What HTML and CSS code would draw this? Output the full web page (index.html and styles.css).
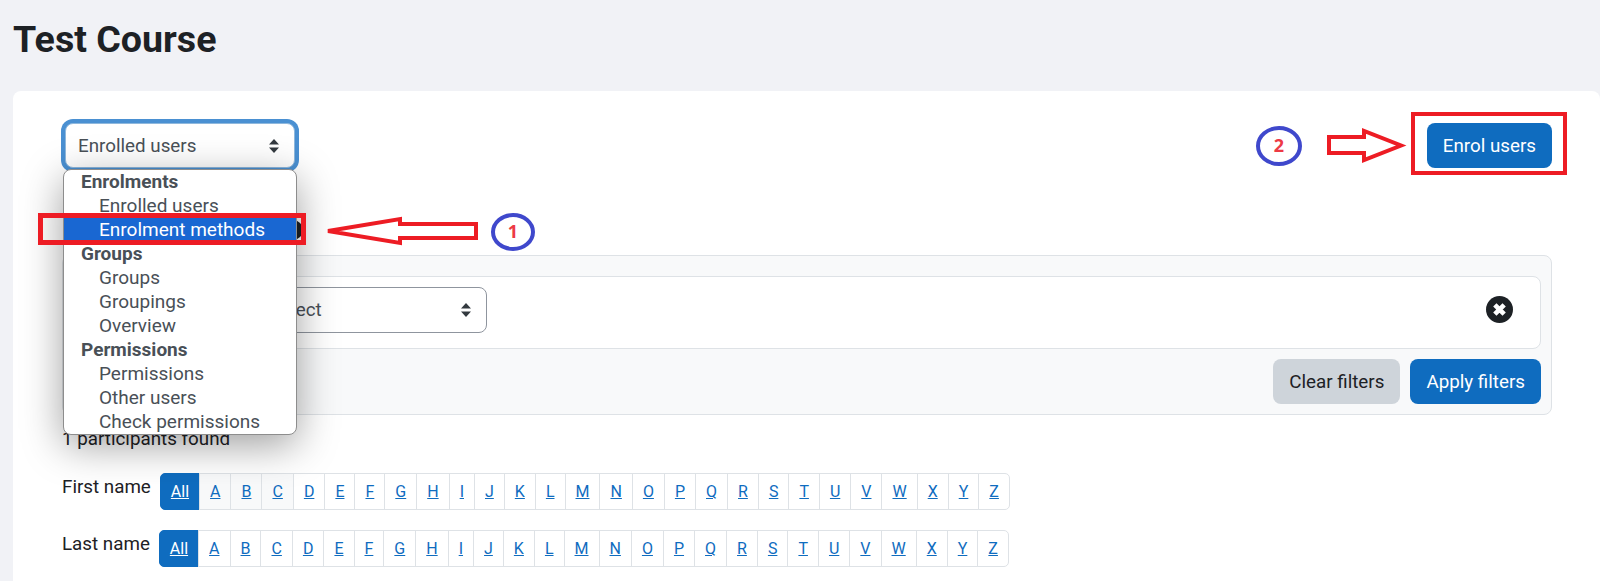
FILE: index.html
```html
<!DOCTYPE html>
<html lang="en">
<head>
  <meta charset="UTF-8">
  <title>Test Course: Participants</title>
  <link rel="stylesheet" href="styles.css">
</head>
<body>
  <h1 class="page-title">Test Course</h1>

  <main class="card">
    <div class="top-row">
      <div class="jump-wrapper">
        <div class="select-box select-focus">
          <span>Enrolled users</span>
          <svg class="sort-icon" viewBox="0 0 10 14"><path d="M5 0l5 5.6H0zM5 14L0 8.4h10z"/></svg>
        </div>
        <ul class="jump-menu">
          <li class="menu-group">Enrolments</li>
          <li>Enrolled users</li>
          <li class="menu-active">Enrolment methods</li>
          <li class="menu-group">Groups</li>
          <li>Groups</li>
          <li>Groupings</li>
          <li>Overview</li>
          <li class="menu-group">Permissions</li>
          <li>Permissions</li>
          <li>Other users</li>
          <li>Check permissions</li>
        </ul>
      </div>
      <button class="btn btn-primary enrol-btn">Enrol users</button>
    </div>

    <div class="hidden-row"><span class="help-dot"></span></div>

    <section class="filter-panel">
      <div class="filter-row">
        <div class="select-box filter-select">
          <span>Select</span>
          <svg class="sort-icon" viewBox="0 0 10 14"><path d="M5 0l5 5.6H0zM5 14L0 8.4h10z"/></svg>
        </div>
        <svg class="remove-icon" viewBox="0 0 26 26">
          <circle cx="13" cy="13" r="13"/>
          <path d="M8.5 8.5l9 9M17.5 8.5l-9 9"/>
        </svg>
      </div>
      <div class="filter-actions">
        <button class="btn btn-secondary">Clear filters</button>
        <button class="btn btn-primary">Apply filters</button>
      </div>
    </section>

    <p class="found">1 participants found</p>

    <div class="initials first-row">
      <span class="initials-label">First name</span>
      <div class="letter-bar">
        <a class="active" href="#">All</a><a class="hovered" href="#">A</a><a class="hovered" href="#">B</a><a class="hovered" href="#">C</a><a href="#">D</a><a href="#">E</a><a href="#">F</a><a href="#">G</a><a href="#">H</a><a href="#">I</a><a href="#">J</a><a href="#">K</a><a href="#">L</a><a href="#">M</a><a href="#">N</a><a href="#">O</a><a href="#">P</a><a href="#">Q</a><a href="#">R</a><a href="#">S</a><a href="#">T</a><a href="#">U</a><a href="#">V</a><a href="#">W</a><a href="#">X</a><a href="#">Y</a><a href="#">Z</a>
      </div>
    </div>
    <div class="initials">
      <span class="initials-label">Last name</span>
      <div class="letter-bar">
        <a class="active" href="#">All</a><a href="#">A</a><a href="#">B</a><a href="#">C</a><a href="#">D</a><a href="#">E</a><a href="#">F</a><a href="#">G</a><a href="#">H</a><a href="#">I</a><a href="#">J</a><a href="#">K</a><a href="#">L</a><a href="#">M</a><a href="#">N</a><a href="#">O</a><a href="#">P</a><a href="#">Q</a><a href="#">R</a><a href="#">S</a><a href="#">T</a><a href="#">U</a><a href="#">V</a><a href="#">W</a><a href="#">X</a><a href="#">Y</a><a href="#">Z</a>
      </div>
    </div>
  </main>

  <!-- red marks drawn on top of the screenshot -->
  <svg class="marks" viewBox="0 0 1600 581">
    <rect class="mark-red mark-thick" x="40.500" y="215.500" width="263" height="27"/>
    <path class="mark-red mark-fill" d="M328 231L400 219V224H476V238H400V243Z"/>
    <ellipse class="mark-blue" cx="513" cy="232" rx="20" ry="17"/>
    <text class="mark-num" x="513" y="238">1</text>

    <rect class="mark-red" x="1413" y="114" width="152" height="59"/>
    <path class="mark-red mark-fill" d="M1329 137H1364V131L1401 145.500L1364 160V153H1329Z"/>
    <ellipse class="mark-blue" cx="1279" cy="146" rx="21" ry="18"/>
    <text class="mark-num" x="1279" y="152">2</text>
  </svg>
</body>
</html>
```

FILE: styles.css
```css
:root {
  --primary: #0f6cbf;
  --text: #1d2125;
  --muted: #495057;
  --line: #dee2e6;
}

* {
  box-sizing: border-box;
}

body {
  margin: 0;
  height: 581px;
  overflow: hidden;
  position: relative;
  background: #f1f2f6;
  color: var(--text);
  font-family: Roboto, "Liberation Sans", sans-serif;
  font-size: 18.8px;
}

.page-title {
  margin: 0;
  padding: 18px 0 0 13px;
  height: 91px;
  font-size: 37.6px;
  line-height: 42px;
  font-weight: 700;
}

.card {
  margin-left: 13px;
  height: 490px;
  padding: 32px 48px 0 49px;
  background: #fff;
  border-radius: 8px 8px 0 0;
}

.top-row {
  display: flex;
  justify-content: space-between;
  align-items: flex-start;
}

.jump-wrapper {
  position: relative;
  margin-left: 3px;
}

.select-box {
  display: flex;
  align-items: center;
  justify-content: space-between;
  height: 45px;
  border: 1px solid #8f959e;
  border-radius: 8px;
  background: #fff;
  color: var(--muted);
}

.select-focus {
  width: 230px;
  padding: 0 15px 0 12px;
  border-color: #8fb8dd;
  box-shadow: 0 0 0 4px #4a90d2;
}

.sort-icon {
  width: 10px;
  height: 14px;
  fill: #343a40;
}

.jump-menu {
  position: absolute;
  top: 46px;
  left: -2px;
  width: 234px;
  height: 266px;
  margin: 0;
  padding: 0;
  overflow: hidden;
  list-style: none;
  background: #fff;
  border: 1px solid #8d8d8d;
  border-radius: 8px;
  box-shadow: 0 10px 40px rgba(0, 0, 0, 0.38);
  color: var(--muted);
  z-index: 2;
  font-size: 19px;
}

.jump-menu li {
  height: 24px;
  line-height: 24px;
  padding-left: 35px;
}

.jump-menu .menu-group {
  padding-left: 17px;
  font-weight: 700;
}

.jump-menu .menu-active {
  background: #1967d2;
  color: #fff;
}

.btn {
  height: 45px;
  padding: 0 16px;
  border: 0;
  border-radius: 8px;
  font: inherit;
}

.btn-primary {
  background: var(--primary);
  color: #fff;
}

.btn-secondary {
  background: #ced4da;
  color: var(--text);
}

.hidden-row {
  height: 87px;
  padding: 52px 0 0 221px;
}

.help-dot {
  display: block;
  width: 20px;
  height: 20px;
  border-radius: 50%;
  background: #1d2125;
}

.filter-panel {
  height: 160px;
  padding: 20px 10px 0;
  background: #f8f9fa;
  border: 1px solid var(--line);
  border-radius: 8px;
}

.filter-row {
  display: flex;
  align-items: center;
  justify-content: space-between;
  height: 73px;
  padding: 0 27px 6px 178px;
  background: #fff;
  border: 1px solid var(--line);
  border-radius: 8px;
}

.filter-select {
  width: 235px;
  height: 46px;
  padding: 0 15px 0 17px;
}

.remove-icon {
  width: 27px;
  height: 27px;
  fill: #1d2125;
}

.remove-icon path {
  fill: none;
  stroke: #fff;
  stroke-width: 4.5px;
}

.filter-actions {
  display: flex;
  justify-content: flex-end;
  gap: 10px;
  margin-top: 10px;
}

.found {
  margin: 12px 0 0;
  line-height: 24px;
}

.initials {
  display: flex;
  gap: 9px;
  margin-top: 20px;
}

.first-row {
  margin-top: 22px;
}

.initials-label {
  line-height: 28px;
}

.letter-bar {
  display: flex;
  height: 37px;
  font-size: 16px;
  line-height: 35px;
}

.letter-bar a {
  padding: 0 10px;
  margin-left: -1px;
  border: 1px solid var(--line);
  background: #fff;
  color: var(--primary);
}

.letter-bar a.hovered {
  background: #f8f9fa;
}

.letter-bar a.active {
  margin-left: 0;
  background: var(--primary);
  border-color: var(--primary);
  color: #fff;
  border-radius: 5px 0 0 5px;
}

.letter-bar a:last-child {
  border-radius: 0 5px 5px 0;
}

.marks {
  position: absolute;
  top: 0;
  left: 0;
  width: 1600px;
  height: 581px;
  z-index: 3;
}

.mark-red {
  fill: none;
  stroke: #ed1c24;
  stroke-width: 4px;
}

.mark-thick {
  stroke-width: 5px;
}

.mark-fill {
  fill: #fff;
}

.mark-blue {
  fill: none;
  stroke: #3f48cc;
  stroke-width: 4px;
}

.mark-num {
  fill: #ed3a45;
  font-family: "Open Sans", sans-serif;
  font-size: 18px;
  font-weight: 700;
  text-anchor: middle;
}
```
